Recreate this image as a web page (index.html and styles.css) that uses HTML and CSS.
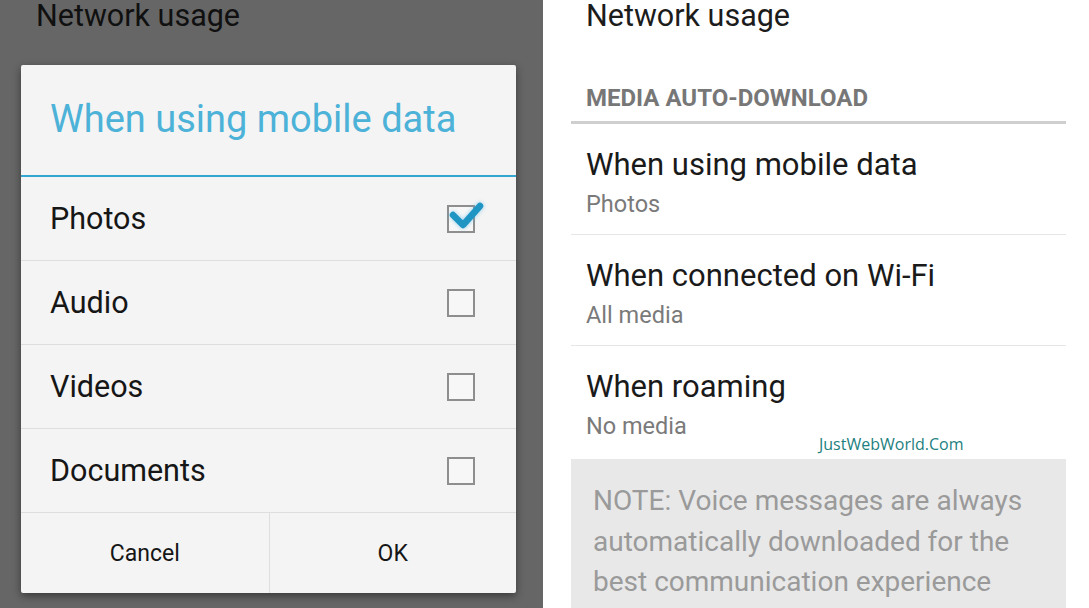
FILE: index.html
```html
<!DOCTYPE html>
<html lang="en">
<head>
    <meta charset="UTF-8">
    <meta name="viewport" content="width=device-width, initial-scale=1.0">
    <title>Media auto-download</title>
    <link rel="stylesheet" href="styles.css">
</head>
<body>
    <div class="screens">
        <!-- left: dialog open over the settings -->
        <section class="screen dimmed">
            <h2 class="screen-title">Network usage</h2>
            <div class="dialog">
                <h1 class="dialog-title">When using mobile data</h1>
                <ul class="choice-list">
                    <li class="choice">
                        <span>Photos</span>
                        <span class="checkbox checked">
                            <svg viewBox="0 0 36 32" width="36" height="32">
                                <path d="M4 18 L14 28 L31 9" fill="none" stroke="#1f95c4" stroke-width="6.5" stroke-linecap="round" stroke-linejoin="round"/>
                            </svg>
                        </span>
                    </li>
                    <li class="choice"><span>Audio</span><span class="checkbox"></span></li>
                    <li class="choice"><span>Videos</span><span class="checkbox"></span></li>
                    <li class="choice"><span>Documents</span><span class="checkbox"></span></li>
                </ul>
                <div class="dialog-actions">
                    <button class="action">Cancel</button>
                    <button class="action">OK</button>
                </div>
            </div>
        </section>

        <!-- right: settings list -->
        <section class="screen plain">
            <h2 class="screen-title">Network usage</h2>
            <div class="group-header">MEDIA AUTO-DOWNLOAD</div>
            <ul class="pref-list">
                <li class="pref">
                    <div class="pref-title">When using mobile data</div>
                    <div class="pref-summary">Photos</div>
                </li>
                <li class="pref">
                    <div class="pref-title">When connected on Wi-Fi</div>
                    <div class="pref-summary">All media</div>
                </li>
                <li class="pref">
                    <div class="pref-title">When roaming</div>
                    <div class="pref-summary">No media</div>
                </li>
            </ul>
            <span class="watermark">JustWebWorld.Com</span>
            <div class="note">NOTE: Voice messages are always automatically downloaded for the best communication experience</div>
        </section>
    </div>
</body>
</html>
```

FILE: styles.css
```css
* { box-sizing: border-box; }
body {
    margin: 0;
    font-family: Roboto, "Noto Sans", sans-serif;
    background: white;
    overflow: hidden;
}
ul { list-style: none; margin: 0; padding: 0; }
h1, h2 { margin: 0; font-weight: normal; }

.screens {
    display: grid;
    grid-template-columns: 543px 1fr;
    width: 1089px;
    height: 608px;
}
.screen { position: relative; overflow: hidden; }
.dimmed { background: #666666; padding-left: 21px; }
.plain { background: #ffffff; padding: 0 23px 0 28px; }

.screen-title {
    font-size: 30.5px;
    line-height: 31px;
    color: #1c1c1c;
    padding-left: 15px;
}
.dimmed .screen-title { color: #101010; }

/* dialog */
.dialog {
    margin-top: 34px;
    width: 495px;
    height: 528px;
    background: #f4f4f4;
    border-radius: 2px;
    box-shadow: 0 3px 8px rgba(0, 0, 0, 0.45);
    display: flex;
    flex-direction: column;
}
.dialog-title {
    height: 112px;
    padding: 0 0 2px 29px;
    display: flex;
    align-items: center;
    font-size: 38px;
    color: #4cb2d8;
    border-bottom: 2px solid #35a6cf;
}
.choice {
    height: 84px;
    padding: 0 41px 0 29px;
    display: flex;
    align-items: center;
    justify-content: space-between;
    font-size: 30.5px;
    color: #161616;
    border-bottom: 1px solid #dedede;
}
.checkbox {
    position: relative;
    width: 28px;
    height: 28px;
    border: 2px solid #8e8e8e;
    background: #f7f7f7;
}
.checkbox svg {
    position: absolute;
    left: 0;
    top: -10px;
    filter: drop-shadow(0 0 2px rgba(80, 180, 230, 0.6));
}
.dialog-actions {
    flex: 1;
    display: grid;
    grid-template-columns: 1fr 1fr;
}
.action {
    border: none;
    background: transparent;
    font-family: inherit;
    font-size: 23px;
    color: #161616;
    padding: 0;
}
.action + .action { border-left: 1px solid #dedede; }

/* settings list */
.group-header {
    margin-top: 53px;
    padding: 0 0 9px 15px;
    line-height: 28px;
    font-size: 24px;
    font-weight: bold;
    color: #777777;
    border-bottom: 3px solid #cfcfcf;
}
.pref {
    height: 111px;
    padding: 23px 0 0 15px;
    border-bottom: 1px solid #e6e6e6;
}
.pref:last-child { border-bottom: none; height: 113px; }
.pref-title {
    font-size: 31px;
    line-height: 36px;
    color: #1a1a1a;
}
.pref-summary {
    margin-top: 6px;
    font-size: 23.5px;
    line-height: 30px;
    color: #7a7a7a;
}
.watermark {
    position: absolute;
    left: 276px;
    top: 433px;
    font-family: "Open Sans", sans-serif;
    font-size: 16px;
    color: #1d7f80;
}
.note {
    background: #e8e8e8;
    padding: 22px 20px 0 22px;
    height: 160px;
    font-size: 28px;
    line-height: 40.5px;
    color: #9a9a9a;
}
```
